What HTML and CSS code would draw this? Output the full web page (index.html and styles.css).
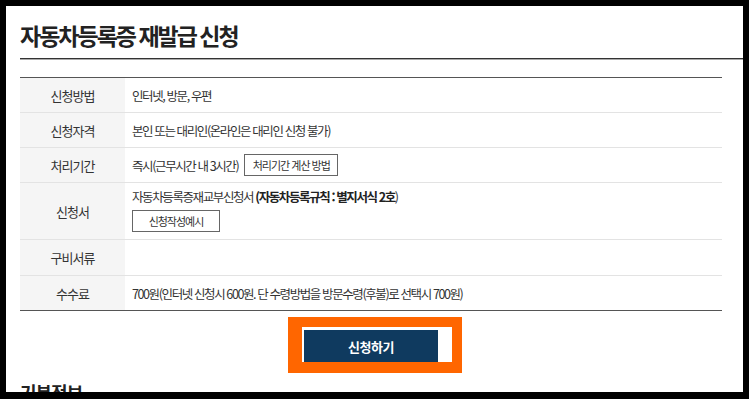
FILE: index.html
```html
<!DOCTYPE html>
<html lang="ko">
<head>
<meta charset="UTF-8">
<meta name="viewport" content="width=device-width, initial-scale=1.0">
<title>자동차등록증 재발급 신청</title>
<link rel="stylesheet" href="styles.css">
</head>
<body>

<div class="frame">
  <h1 class="page-title">자동차등록증 재발급 신청</h1>

  <div class="info-table">
    <div class="info-row">
      <div class="label">신청방법</div>
      <div class="value">인터넷, 방문, 우편</div>
    </div>
    <div class="info-row">
      <div class="label">신청자격</div>
      <div class="value">본인 또는 대리인(온라인은 대리인 신청 불가)</div>
    </div>
    <div class="info-row">
      <div class="label">처리기간</div>
      <div class="value">즉시(근무시간 내 3시간) <button class="small-btn calc-btn">처리기간 계산 방법</button></div>
    </div>
    <div class="info-row tall">
      <div class="label">신청서</div>
      <div class="value stack">
        <p class="form-name">자동차등록증재교부신청서 <b>(자동차등록규칙 : 별지서식 2호</b>)</p>
        <button class="small-btn sample-btn">신청작성예시</button>
      </div>
    </div>
    <div class="info-row docs">
      <div class="label">구비서류</div>
      <div class="value"></div>
    </div>
    <div class="info-row last">
      <div class="label">수수료</div>
      <div class="value">700원(인터넷 신청시 600원. 단 수령방법을 방문수령(후불)로 선택시 700원)</div>
    </div>
  </div>

  <div class="apply-wrap">
    <button class="apply-btn">신청하기</button>
  </div>

  <h2 class="sub-title">기본정보</h2>

  <!-- annotation box drawn over the apply button -->
  <div class="highlight"></div>
</div>

</body>
</html>
```

FILE: styles.css
```css
* { box-sizing: border-box; }
body { margin: 0; background: #fff; font-family: "Noto Sans CJK KR", "Noto Sans", sans-serif; color: #333; }

.frame { position: relative; width: 749px; height: 399px; border: 6px solid #000; border-bottom-width: 7px; padding-left: 14px; overflow: hidden; background: #fff; }

.page-title { margin: 0; padding: 14px 0 8px; font-size: 23px; line-height: 30px; font-weight: 700; color: #222; letter-spacing: -2px; word-spacing: -1px; border-bottom: 1px solid #333; box-shadow: 0 1px 0 #aaa; }

.info-table { width: 702px; margin-top: 18px; border-top: 1px solid #555; font-size: 12.5px; letter-spacing: -1.4px; }
.info-row { display: flex; border-bottom: 1px solid #e3e3e3; min-height: 35px; }
.info-row.tall { min-height: 57px; }
.info-row.docs { min-height: 36px; }
.info-row.last { border-bottom-color: #555; }
.label { width: 105px; flex-shrink: 0; background: #f5f5f5; display: flex; align-items: center; justify-content: center; color: #333; font-size: 13px; letter-spacing: -1px; }
.value { flex: 1; display: flex; align-items: center; padding: 0 7px; color: #333; }
.value.stack { flex-direction: column; align-items: flex-start; justify-content: flex-start; padding-top: 5px; }
.form-name { margin: 0; line-height: 18px; }
.form-name b { font-weight: 700; color: #222; }

.small-btn { background: #fff; border: 1px solid #666; font-family: inherit; font-size: 11px; letter-spacing: -1px; color: #333; height: 22px; padding: 0; }
.calc-btn { width: 94px; margin-left: 6px; }
.sample-btn { width: 88px; margin-top: 4px; }

.apply-wrap { width: 702px; display: flex; justify-content: center; padding-top: 19px; }
.apply-btn { width: 134px; height: 32px; border: none; background: #0f3a5f; color: #fff; font-family: inherit; font-size: 13px; font-weight: 700; letter-spacing: -0.5px; }

.sub-title { margin: 18px 0 0; font-size: 18px; line-height: 24px; font-weight: 700; color: #222; letter-spacing: -1px; }

.highlight { position: absolute; left: 282px; top: 311px; width: 174px; height: 56px; border-style: solid; border-color: #ff6600; border-width: 10px 10px 11px 14px; }
```
